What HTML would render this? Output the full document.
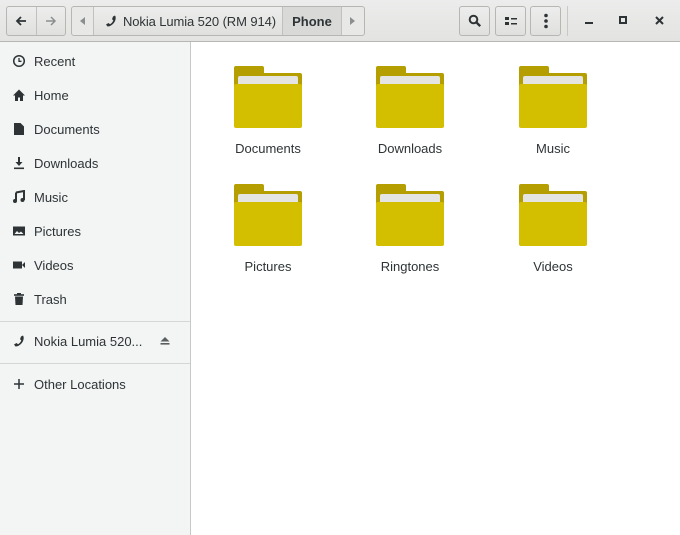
<!DOCTYPE html>
<html><head><style>
*{box-sizing:border-box;margin:0;padding:0}
body{width:680px;height:535px;overflow:hidden;background:#fff;font-family:"Liberation Sans","DejaVu Sans",sans-serif;font-size:13px;color:#2e3436;position:relative}
.hb{position:absolute;left:0;top:0;width:680px;height:42px;background:linear-gradient(#ececec,#e3e3e1);border-bottom:1px solid #b6b6b3}
.btn{position:absolute;top:6px;height:30px;border:1px solid #b6b6b3;border-radius:3px;background:linear-gradient(#ededed,#e0e0de);display:flex;align-items:center;justify-content:center}
.side{position:absolute;left:0;top:42px;width:191px;height:493px;background:#f3f4f4;border-right:1px solid #c8c8c6}
.it{position:absolute;left:0;width:190px;height:34px;display:flex;align-items:center;padding-left:12px;white-space:nowrap}
.it svg{width:14px;height:14px;margin-right:8px}
.sep{position:absolute;left:0;width:190px;height:1px;background:#d6d6d4}
.f{position:absolute;width:120px;text-align:center}
.f .ic{position:relative;width:68px;height:62px;margin:0 auto}
.f .lb{margin-top:13px}
</style></head><body>
<div class="hb">
 <div class="btn" style="left:6px;width:60px;padding:0">
  <div style="width:30px;height:28px;display:flex;align-items:center;justify-content:center;border-right:1px solid #c0c0be"><svg width="14" height="14" viewBox="0 0 14 14"><path d="M12 7H3M7 3L3 7l4 4" stroke="#2e3436" stroke-width="1.8" fill="none"/></svg></div>
  <div style="width:29px;height:28px;display:flex;align-items:center;justify-content:center"><svg width="14" height="14" viewBox="0 0 14 14"><path d="M2 7h9M7 3l4 4-4 4" stroke="#8b8e8f" stroke-width="1.5" fill="none"/></svg></div>
 </div>
 <div class="btn" style="left:71px;width:294px;justify-content:flex-start;background:#e8e8e7">
  <div style="width:22px;height:28px;display:flex;align-items:center;justify-content:center;border-right:1px solid #c0c0be"><svg width="6" height="8"><path d="M5 0v8L0 4z" fill="#8b8e8f"/></svg></div>
  <div style="width:189px;height:28px;display:flex;align-items:center;padding-left:10px;background:linear-gradient(#ededed,#e0e0de);border-right:1px solid #c0c0be;font-size:13px;white-space:nowrap;letter-spacing:-0.1px"><svg width="14" height="14" viewBox="0 0 14 14" style="margin-right:5px;flex:none"><path d="M11 1.5c1 1.5 1 4-0.5 6.5-1.7 2.8-4.5 4.5-7 4.5L2 10.5l2.5-1.5 1.5 1.2c1.5-0.8 2.8-2.3 3.3-4L8 5.3 9 2.5z" fill="#2e3436"/></svg>Nokia Lumia 520 (RM 914)</div>
  <div style="width:59px;height:28px;display:flex;align-items:center;justify-content:center;font-weight:bold;background:#d9d9d7;border-right:1px solid #c0c0be">Phone</div>
  <div style="flex:1;display:flex;align-items:center;justify-content:center"><svg width="6" height="8"><path d="M0 0v8l5-4z" fill="#8b8e8f"/></svg></div>
 </div>
 <div class="btn" style="left:459px;width:31px"><svg width="14" height="14" viewBox="0 0 14 14"><circle cx="5.5" cy="5.5" r="3.8" stroke="#2e3436" stroke-width="2" fill="none"/><path d="M8.2 8.2l4 4" stroke="#2e3436" stroke-width="2.4"/></svg></div>
 <div class="btn" style="left:495px;width:31px"><svg width="14" height="14" viewBox="0 0 14 14"><rect x="1" y="3" width="4" height="3" fill="#2e3436"/><rect x="1" y="8" width="4" height="3" fill="#2e3436"/><rect x="7" y="4" width="6" height="1.5" fill="#2e3436"/><rect x="7" y="9" width="6" height="1.5" fill="#2e3436"/></svg></div>
 <div class="btn" style="left:530px;width:31px"><svg width="6" height="16"><circle cx="3" cy="2.5" r="1.8" fill="#2e3436"/><circle cx="3" cy="8" r="1.8" fill="#2e3436"/><circle cx="3" cy="13.5" r="1.8" fill="#2e3436"/></svg></div>
 <div style="position:absolute;left:567px;top:6px;width:1px;height:30px;background:#c8c8c6"></div>
 <div style="position:absolute;left:585px;top:22px;width:8px;height:2px;background:#2e3436"></div>
 <div style="position:absolute;left:619px;top:16px;width:8px;height:8px;border:2px solid #2e3436"></div>
 <svg style="position:absolute;left:655px;top:16px" width="9" height="9"><path d="M1 1l7 7M8 1L1 8" stroke="#2e3436" stroke-width="2"/></svg>
</div>
<div class="side">
 <div class="it" style="top:2px"><svg viewBox="0 0 14 14"><circle cx="7" cy="7" r="5.3" stroke="#2e3436" stroke-width="1.5" fill="none"/><path d="M7 4v3.3h2.5" stroke="#2e3436" stroke-width="1.3" fill="none"/></svg>Recent</div>
 <div class="it" style="top:36px"><svg viewBox="0 0 14 14"><path d="M7 1.5L1 7.5h2V13h3V9.5h2V13h3V7.5h2z" fill="#2e3436"/></svg>Home</div>
 <div class="it" style="top:70px"><svg viewBox="0 0 14 14"><path d="M2 1h6.5L12 4.5V13H2z" fill="#2e3436"/></svg>Documents</div>
 <div class="it" style="top:104px"><svg viewBox="0 0 14 14"><path d="M6 1h2v5h2.5L7 10 3.5 6H6z" fill="#2e3436"/><rect x="2" y="11.5" width="10" height="1.6" fill="#2e3436"/></svg>Downloads</div>
 <div class="it" style="top:138px"><svg viewBox="0 0 14 14"><path d="M4 2.5l8-1.5v9" stroke="#2e3436" stroke-width="2" fill="none"/><path d="M4 2.5V11" stroke="#2e3436" stroke-width="2"/><circle cx="3" cy="11" r="2" fill="#2e3436"/><circle cx="10.5" cy="10" r="2" fill="#2e3436"/></svg>Music</div>
 <div class="it" style="top:172px"><svg viewBox="0 0 14 14"><rect x="1" y="2.5" width="12" height="9" fill="#2e3436"/><path d="M2.5 10l2.5-3 2 2 2-1.5 2.5 2.5z" fill="#f3f4f4"/></svg>Pictures</div>
 <div class="it" style="top:206px"><svg viewBox="0 0 14 14"><rect x="1" y="3.5" width="9" height="7" fill="#2e3436"/><path d="M10 7l3-3v6z" fill="#2e3436"/></svg>Videos</div>
 <div class="it" style="top:240px"><svg viewBox="0 0 14 14"><rect x="2" y="2.2" width="10" height="1.6" fill="#2e3436"/><rect x="5" y="1" width="4" height="1.5" fill="#2e3436"/><path d="M3 4.5h8l-.5 8.5h-7z" fill="#2e3436"/></svg>Trash</div>
 <div class="sep" style="top:279px"></div>
 <div class="it" style="top:282px"><svg viewBox="0 0 14 14"><path d="M11 1.5c1 1.5 1 4-0.5 6.5-1.7 2.8-4.5 4.5-7 4.5L2 10.5l2.5-1.5 1.5 1.2c1.5-0.8 2.8-2.3 3.3-4L8 5.3 9 2.5z" fill="#2e3436"/></svg>Nokia Lumia 520...<svg viewBox="0 0 14 14" style="position:absolute;left:158px;margin:0"><path d="M7 3l4.5 4.5h-9z" fill="#5a5e5f"/><rect x="2.5" y="9" width="9" height="1.6" fill="#5a5e5f"/></svg></div>
 <div class="sep" style="top:321px"></div>
 <div class="it" style="top:325px"><svg viewBox="0 0 14 14"><path d="M7 2v10M2 7h10" stroke="#2e3436" stroke-width="1.5"/></svg>Other Locations</div>
</div>
<div class="f" style="left:208px;top:66px"><div class="ic"><svg width="68" height="62"><path d="M2 0h26a2 2 0 0 1 2 2v5h36a2 2 0 0 1 2 2v20H0V2a2 2 0 0 1 2-2z" fill="#b59f00"/><rect x="4" y="10" width="60" height="12" rx="2" fill="#e4e4e2"/><rect x="0" y="18" width="68" height="44" rx="2" fill="#d4be00"/></svg></div><div class="lb">Documents</div></div>
<div class="f" style="left:350px;top:66px"><div class="ic"><svg width="68" height="62"><path d="M2 0h26a2 2 0 0 1 2 2v5h36a2 2 0 0 1 2 2v20H0V2a2 2 0 0 1 2-2z" fill="#b59f00"/><rect x="4" y="10" width="60" height="12" rx="2" fill="#e4e4e2"/><rect x="0" y="18" width="68" height="44" rx="2" fill="#d4be00"/></svg></div><div class="lb">Downloads</div></div>
<div class="f" style="left:493px;top:66px"><div class="ic"><svg width="68" height="62"><path d="M2 0h26a2 2 0 0 1 2 2v5h36a2 2 0 0 1 2 2v20H0V2a2 2 0 0 1 2-2z" fill="#b59f00"/><rect x="4" y="10" width="60" height="12" rx="2" fill="#e4e4e2"/><rect x="0" y="18" width="68" height="44" rx="2" fill="#d4be00"/></svg></div><div class="lb">Music</div></div>
<div class="f" style="left:208px;top:184px"><div class="ic"><svg width="68" height="62"><path d="M2 0h26a2 2 0 0 1 2 2v5h36a2 2 0 0 1 2 2v20H0V2a2 2 0 0 1 2-2z" fill="#b59f00"/><rect x="4" y="10" width="60" height="12" rx="2" fill="#e4e4e2"/><rect x="0" y="18" width="68" height="44" rx="2" fill="#d4be00"/></svg></div><div class="lb">Pictures</div></div>
<div class="f" style="left:350px;top:184px"><div class="ic"><svg width="68" height="62"><path d="M2 0h26a2 2 0 0 1 2 2v5h36a2 2 0 0 1 2 2v20H0V2a2 2 0 0 1 2-2z" fill="#b59f00"/><rect x="4" y="10" width="60" height="12" rx="2" fill="#e4e4e2"/><rect x="0" y="18" width="68" height="44" rx="2" fill="#d4be00"/></svg></div><div class="lb">Ringtones</div></div>
<div class="f" style="left:493px;top:184px"><div class="ic"><svg width="68" height="62"><path d="M2 0h26a2 2 0 0 1 2 2v5h36a2 2 0 0 1 2 2v20H0V2a2 2 0 0 1 2-2z" fill="#b59f00"/><rect x="4" y="10" width="60" height="12" rx="2" fill="#e4e4e2"/><rect x="0" y="18" width="68" height="44" rx="2" fill="#d4be00"/></svg></div><div class="lb">Videos</div></div>
</body></html>
